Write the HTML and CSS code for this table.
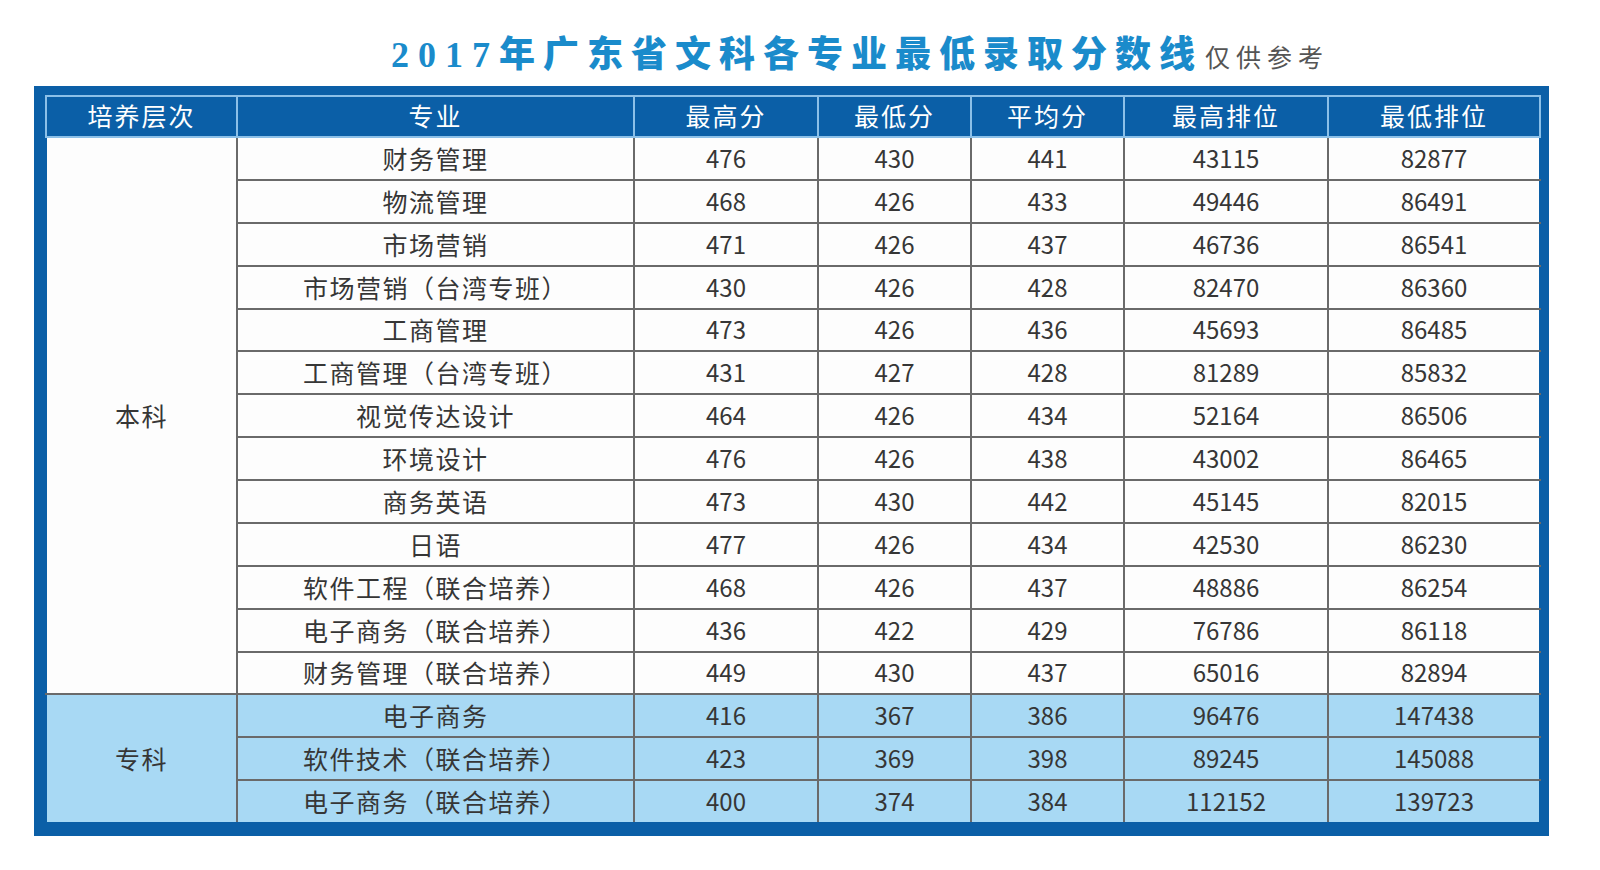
FILE: index.html
```html
<!DOCTYPE html>
<html lang="zh-CN">
<head>
<meta charset="utf-8">
<title>2017年广东省文科各专业最低录取分数线</title>
<link rel="stylesheet" href="styles.css">
</head>
<body>
<div class="page">
  <div class="title-row">
    <h1 class="title"><span class="year">2017</span>年广东省文科各专业最低录取分数线</h1>
    <span class="note">仅供参考</span>
  </div>
  <div class="frame">
    <table class="scores">
      <colgroup>
        <col class="c1"><col class="c2"><col class="c3"><col class="c4"><col class="c5"><col class="c6"><col class="c7">
      </colgroup>
      <thead>
        <tr><th>培养层次</th><th>专业</th><th>最高分</th><th>最低分</th><th>平均分</th><th>最高排位</th><th>最低排位</th></tr>
      </thead>
      <tbody class="benke">
        <tr><td class="level" rowspan="13">本科</td><td class="major">财务管理</td><td>476</td><td>430</td><td>441</td><td>43115</td><td class="last">82877</td></tr>
        <tr><td class="major">物流管理</td><td>468</td><td>426</td><td>433</td><td>49446</td><td class="last">86491</td></tr>
        <tr><td class="major">市场营销</td><td>471</td><td>426</td><td>437</td><td>46736</td><td class="last">86541</td></tr>
        <tr><td class="major">市场营销（台湾专班）</td><td>430</td><td>426</td><td>428</td><td>82470</td><td class="last">86360</td></tr>
        <tr><td class="major">工商管理</td><td>473</td><td>426</td><td>436</td><td>45693</td><td class="last">86485</td></tr>
        <tr><td class="major">工商管理（台湾专班）</td><td>431</td><td>427</td><td>428</td><td>81289</td><td class="last">85832</td></tr>
        <tr><td class="major">视觉传达设计</td><td>464</td><td>426</td><td>434</td><td>52164</td><td class="last">86506</td></tr>
        <tr><td class="major">环境设计</td><td>476</td><td>426</td><td>438</td><td>43002</td><td class="last">86465</td></tr>
        <tr><td class="major">商务英语</td><td>473</td><td>430</td><td>442</td><td>45145</td><td class="last">82015</td></tr>
        <tr><td class="major">日语</td><td>477</td><td>426</td><td>434</td><td>42530</td><td class="last">86230</td></tr>
        <tr><td class="major">软件工程（联合培养）</td><td>468</td><td>426</td><td>437</td><td>48886</td><td class="last">86254</td></tr>
        <tr><td class="major">电子商务（联合培养）</td><td>436</td><td>422</td><td>429</td><td>76786</td><td class="last">86118</td></tr>
        <tr><td class="major">财务管理（联合培养）</td><td>449</td><td>430</td><td>437</td><td>65016</td><td class="last">82894</td></tr>
      </tbody>
      <tbody class="zhuanke">
        <tr><td class="level" rowspan="3">专科</td><td class="major">电子商务</td><td>416</td><td>367</td><td>386</td><td>96476</td><td class="last">147438</td></tr>
        <tr><td class="major">软件技术（联合培养）</td><td>423</td><td>369</td><td>398</td><td>89245</td><td class="last">145088</td></tr>
        <tr class="final"><td class="major">电子商务（联合培养）</td><td>400</td><td>374</td><td>384</td><td>112152</td><td class="last">139723</td></tr>
      </tbody>
    </table>
  </div>
</div>
</body>
</html>
```

FILE: styles.css
```css
html, body {
  margin: 0;
  padding: 0;
  background: #ffffff;
}

.page {
  width: 1600px;
  padding-left: 34px;
  box-sizing: border-box;
}

.title-row {
  height: 86px;
  box-sizing: border-box;
  padding-top: 37px;
  padding-left: 357px;
  display: flex;
  align-items: baseline;
}

.title {
  margin: 0;
  font-family: "Liberation Serif", "Noto Sans CJK SC", serif;
  font-weight: 900;
  font-size: 36px;
  line-height: 36px;
  letter-spacing: 8px;
  color: #1a8bcb;
}

.title .year {
  letter-spacing: 9px;
  font-weight: 700;
}

.note {
  font-family: "Noto Sans CJK SC", sans-serif;
  font-size: 25px;
  line-height: 32px;
  letter-spacing: 6px;
  color: #555555;
  margin-left: 2px;
}

.frame {
  width: 1515px;
  box-sizing: border-box;
  background: #0b5fa7;
  padding: 9px 10px 12px 11px;
}

.scores {
  width: 1494px;
  table-layout: fixed;
  border-collapse: collapse;
  font-family: "Noto Sans CJK SC", sans-serif;
}

.c1 { width: 191px; }
.c2 { width: 397px; }
.c3 { width: 184px; }
.c4 { width: 153px; }
.c5 { width: 153px; }
.c6 { width: 204px; }
.c7 { width: 212px; }

.scores th {
  height: 36px;
  padding: 0 0 3px;
  background: #0b5fa7;
  color: #ffffff;
  font-weight: 400;
  font-size: 25px;
  line-height: 30px;
  text-align: center;
  border: 2px solid #8cc0e8;
  letter-spacing: 2px;
}

.scores td {
  height: 39.875px;
  padding: 0 0 1px;
  color: #363636;
  font-size: 24px;
  line-height: 30px;
  text-align: center;
  border: 2px solid #6a6a6a;
}

.scores td.major,
.scores td.level {
  font-size: 25px;
  letter-spacing: 1.5px;
}

.scores td.level {
  border-left-color: #0b5fa7;
}

.scores td.last {
  border-right-color: #0b5fa7;
}

.benke td {
  background: #fdfdfd;
}

.zhuanke td {
  background: #a8d9f4;
}

.zhuanke td.level,
.final td {
  border-bottom-color: #0b5fa7;
}
```
